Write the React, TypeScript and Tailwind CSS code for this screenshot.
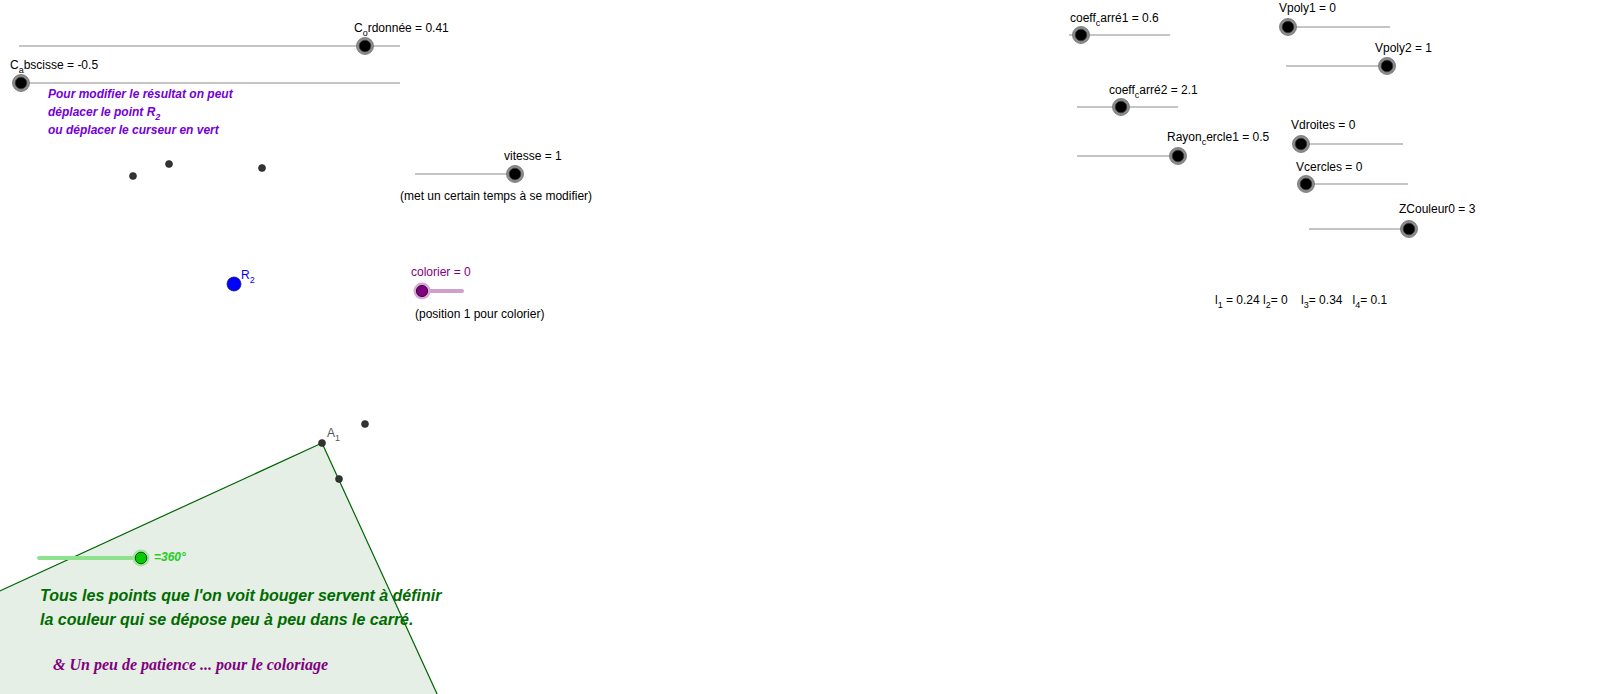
import React from "react";

const SANS = '"Liberation Sans", Arial, sans-serif';
const SERIF = '"Liberation Serif", "Times New Roman", serif';

function Knob({ x, y }: { x: number; y: number }) {
  return (
    <g>
      <circle cx={x} cy={y} r={8.5} fill="#8c8c8c" stroke="#6e6e6e" strokeWidth={0.8} />
      <circle cx={x} cy={y} r={5.8} fill="#000" stroke="#3a3a3a" strokeWidth={0.8} />
    </g>
  );
}

function Slider({ x1, x2, y, k }: { x1: number; x2: number; y: number; k: number }) {
  return (
    <g>
      <line x1={x1} y1={y} x2={x2} y2={y} stroke="#8a8a8a" strokeWidth={1} />
      <Knob x={k} y={y} />
    </g>
  );
}

function Dot({ x, y }: { x: number; y: number }) {
  return <circle cx={x} cy={y} r={3.5} fill="#333" stroke="#222" strokeWidth={0.6} />;
}

function Label({
  x,
  y,
  pre,
  sub,
  post,
  fill = "#000",
}: {
  x: number;
  y: number;
  pre: string;
  sub?: string;
  post?: string;
  fill?: string;
}) {
  return (
    <text x={x} y={y} fontFamily={SANS} fontSize={12} fill={fill}>
      {pre}
      {sub !== undefined && (
        <tspan fontSize={9} dy={4}>
          {sub}
        </tspan>
      )}
      {post !== undefined && (
        <tspan fontSize={12} dy={sub !== undefined ? -4 : 0}>
          {post}
        </tspan>
      )}
    </text>
  );
}

export default function App() {
  return (
    <div className="relative w-[1600px] h-[694px] overflow-hidden bg-white">
      <svg className="absolute inset-0" width={1600} height={694} viewBox="0 0 1600 694">
        {/* polygon (square) */}
        <polygon points="322,443 -20,600 -20,720 449,720" fill="#e5efe5" />
        <line x1={322} y1={443} x2={-20} y2={600} stroke="#006400" strokeWidth={1.2} />
        <line x1={322} y1={443} x2={449} y2={720} stroke="#006400" strokeWidth={1.2} />

        {/* left sliders */}
        <Slider x1={19} x2={400} y={46} k={365} />
        <Slider x1={21} x2={400} y={83} k={21} />
        <Slider x1={415} x2={515} y={174} k={515} />

        {/* colorier slider */}
        <line x1={422} y1={291} x2={462} y2={291} stroke="#cf9fcf" strokeWidth={4} strokeLinecap="round" />
        <circle cx={422} cy={291} r={8.5} fill="#d6a8d6" />
        <circle cx={422} cy={291} r={5.6} fill="#800080" stroke="#2a002a" strokeWidth={0.9} />

        {/* green angle slider */}
        <line x1={39} y1={558} x2={141} y2={558} stroke="#8ee28e" strokeWidth={4} strokeLinecap="round" />
        <circle cx={141} cy={558} r={8.5} fill="#9fe49f" />
        <circle cx={141} cy={558} r={5.8} fill="#00cc00" stroke="#0a3a0a" strokeWidth={0.9} />

        {/* right sliders */}
        <Slider x1={1069} x2={1170} y={35} k={1081} />
        <Slider x1={1288} x2={1390} y={27} k={1288} />
        <Slider x1={1286} x2={1387} y={66} k={1387} />
        <Slider x1={1077} x2={1178} y={107} k={1121} />
        <Slider x1={1077} x2={1178} y={156} k={1178} />
        <Slider x1={1301} x2={1403} y={144} k={1301} />
        <Slider x1={1306} x2={1408} y={184} k={1306} />
        <Slider x1={1309} x2={1409} y={229} k={1409} />

        {/* dots */}
        <Dot x={133} y={176} />
        <Dot x={169} y={164} />
        <Dot x={262} y={168} />
        <Dot x={365} y={424} />
        <Dot x={339} y={479} />
        <Dot x={322} y={443} />

        {/* R2 point */}
        <circle cx={234} cy={284} r={7} fill="#0000ff" stroke="#1a1a66" strokeWidth={0.8} />

        {/* labels */}
        <Label x={354} y={32} pre="C" sub="o" post="rdonnée = 0.41" />
        <Label x={10} y={69} pre="C" sub="a" post="bscisse = -0.5" />
        <Label x={504} y={160} pre="vitesse = 1" />
        <Label x={400} y={200} pre="(met un certain temps à se modifier)" />
        <Label x={411} y={276} pre="colorier = 0" fill="#800080" />
        <Label x={415} y={318} pre="(position 1 pour colorier)" />
        <Label x={241} y={279} pre="R" sub="2" fill="#0000ff" />
        <Label x={327} y={437} pre="A" sub="1" fill="#555" />

        <Label x={1070} y={22} pre="coeff" sub="c" post="arré1 = 0.6" />
        <Label x={1279} y={12} pre="Vpoly1 = 0" />
        <Label x={1375} y={52} pre="Vpoly2 = 1" />
        <Label x={1109} y={94} pre="coeff" sub="c" post="arré2 = 2.1" />
        <Label x={1291} y={129} pre="Vdroites = 0" />
        <Label x={1167} y={141} pre="Rayon" sub="c" post="ercle1 = 0.5" />
        <Label x={1296} y={171} pre="Vcercles = 0" />
        <Label x={1399} y={213} pre="ZCouleur0 = 3" />

        <text x={1215} y={304} fontFamily={SANS} fontSize={12} fill="#000" style={{ whiteSpace: "pre" }}>
          l<tspan fontSize={9} dy={4}>1</tspan>
          <tspan dy={-4}> = 0.24 l</tspan>
          <tspan fontSize={9} dy={4}>2</tspan>
          <tspan dy={-4}>= 0    l</tspan>
          <tspan fontSize={9} dy={4}>3</tspan>
          <tspan dy={-4}>= 0.34   l</tspan>
          <tspan fontSize={9} dy={4}>4</tspan>
          <tspan dy={-4}>= 0.1</tspan>
        </text>

        {/* purple instructions */}
        <g fontFamily={SANS} fontSize={12} fontWeight="bold" fontStyle="italic" fill="#7400d8">
          <text x={48} y={98}>Pour modifier le résultat on peut</text>
          <text x={48} y={116}>
            déplacer le point R<tspan fontSize={9} dy={4}>2</tspan>
          </text>
          <text x={48} y={134}>ou déplacer le curseur en vert</text>
        </g>

        {/* angle label */}
        <text x={154} y={561} fontFamily={SANS} fontSize={12} fontWeight="bold" fontStyle="italic" fill="#22cc22">
          =360°
        </text>

        {/* green text */}
        <g fontFamily={SANS} fontSize={16} fontWeight="bold" fontStyle="italic" fill="#006b00">
          <text x={40} y={601}>Tous les points que l'on voit bouger servent à définir</text>
          <text x={40} y={625}>la couleur qui se dépose peu à peu dans le carré.</text>
        </g>

        <text x={53} y={670} fontFamily={SERIF} fontSize={16} fontWeight="bold" fontStyle="italic" fill="#800080">
          &amp; Un peu de patience ... pour le coloriage
        </text>
      </svg>
    </div>
  );
}
